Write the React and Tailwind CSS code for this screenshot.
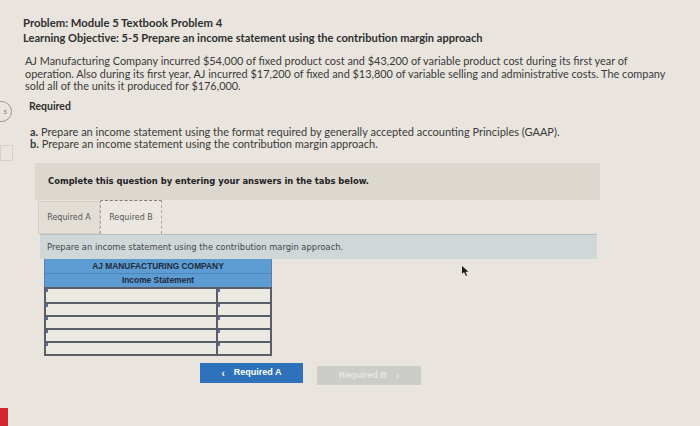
import React from 'react';

const rows = [0, 1, 2, 3, 4];

const App = () => {
  return (
    <div className="relative w-[700px] h-[426px] overflow-hidden bg-[#e9e5de] text-[#2f2f2f] font-['Lato','Open_Sans',sans-serif]">
      {/* side marker from the outer page */}
      <div className="absolute left-[-12px] top-[101px] w-[24px] h-[21px] rounded-full border border-[#9a968f] flex items-center justify-end pr-[4px] text-[6px] text-[#666]">
        5
      </div>
      <div className="absolute left-0 top-[145px] w-[13px] h-[16px] border border-[#d6d2ca]" />
      <div className="absolute left-0 top-[408px] w-[8px] h-[18px] bg-[#d4262f]" />

      <div className="pl-[23px] pt-[15px]">
        <h1 className="text-[11.3px] font-bold leading-[15px] whitespace-nowrap">Problem: Module 5 Textbook Problem 4</h1>
        <h2 className="text-[11.1px] font-bold leading-[15px] whitespace-nowrap">
          Learning Objective: 5-5 Prepare an income statement using the contribution margin approach
        </h2>

        <p className="mt-[10px] ml-[2px] text-[10.9px] leading-[12.5px] text-[#3a3a3a] whitespace-nowrap">
          AJ Manufacturing Company incurred $54,000 of fixed product cost and $43,200 of variable product cost during its first year of
          <br />
          operation. Also during its first year, AJ incurred $17,200 of fixed and $13,800 of variable selling and administrative costs. The company
          <br />
          sold all of the units it produced for $176,000.
        </p>

        <div className="mt-[7px] ml-[6px] text-[10.5px] font-bold leading-[13px]">Required</div>

        <ul className="mt-[13.5px] ml-[7px] text-[11px] leading-[12px] text-[#3a3a3a] whitespace-nowrap">
          <li><span className="font-bold">a.</span> Prepare an income statement using the format required by generally accepted accounting Principles (GAAP).</li>
          <li><span className="font-bold">b.</span> Prepare an income statement using the contribution margin approach.</li>
        </ul>

        <div className="mt-[13px] ml-[12px] w-[565px] h-[37px] bg-[#dcd7cf] flex items-center pl-[13px] font-['DejaVu_Sans',sans-serif] text-[8.4px] font-bold text-[#222] whitespace-nowrap">
          Complete this question by entering your answers in the tabs below.
        </div>

        <div className="ml-[15px] flex items-end h-[34px] font-['DejaVu_Sans',sans-serif] text-[8px] text-[#555] whitespace-nowrap">
          <div className="w-[62px] h-[33px] bg-[#e2ded6] border border-[#d2cec6] flex items-center justify-center">Required A</div>
          <div className="w-[62px] h-[34px] bg-[#ebe7e0] border-x border-[#a9a59e] border-t border-dashed border-t-[#7f7b74] flex items-center justify-center">Required B</div>
        </div>

        <div className="ml-[17px] w-[557px] h-[25px] bg-[#cfd7d8] border-t border-[#b8c0c1] flex items-center pl-[7px] font-['DejaVu_Sans',sans-serif] text-[8.4px] text-[#444] whitespace-nowrap">
          Prepare an income statement using the contribution margin approach.
        </div>

        <div className="ml-[21px] w-[228px] font-['Liberation_Sans',sans-serif]">
          <div className="bg-[#5d9bd3] border-x border-[#5b7fa6] text-center text-[8.4px] font-bold text-[#1f2a3a] leading-[13px] pt-[1px] whitespace-nowrap">
            <div className="border-b border-[#4e86bb]">AJ MANUFACTURING COMPANY</div>
            <div>Income Statement</div>
          </div>
          <div className="border-2 border-[#5a5e66] bg-[#ece9e2]">
            {rows.map((r) => (
              <div key={r} className={`flex h-[13px] ${r > 0 ? 'border-t-2 border-[#5a5e66]' : ''}`}>
                <div className="flex-1 border-r-2 border-[#5a5e66] relative">
                  <span className="absolute left-0 top-0 w-[2px] h-[3px] bg-[#5a6f9a]" />
                </div>
                <div className="w-[52px] relative">
                  <span className="absolute left-0 top-0 w-[2px] h-[3px] bg-[#5a6f9a]" />
                </div>
              </div>
            ))}
          </div>
        </div>

        <div className="mt-[7px] ml-[177px] flex items-start gap-[14px] font-['Liberation_Sans',sans-serif] text-[9px] font-bold whitespace-nowrap">
          <button className="w-[103px] h-[20px] bg-[#2d72bb] text-white flex items-center justify-center gap-[9px]">
            <span className="text-[10px]">&lsaquo;</span>
            <span>Required A</span>
          </button>
          <button className="mt-[3px] w-[104px] h-[19px] bg-[#ccccc8] text-[#e6e6e2] flex items-center justify-center gap-[9px]">
            <span>Required B</span>
            <span className="text-[10px]">&rsaquo;</span>
          </button>
        </div>
      </div>

      {/* mouse pointer */}
      <svg className="absolute left-[462px] top-[266px]" width="7" height="10" viewBox="0 0 7 10">
        <path d="M0 0 L0 8 L2 6 L4 10 L5 9.5 L3.5 5.8 L6.5 5.8 Z" fill="#1a1a1a" />
      </svg>
    </div>
  );
};

export default App;
